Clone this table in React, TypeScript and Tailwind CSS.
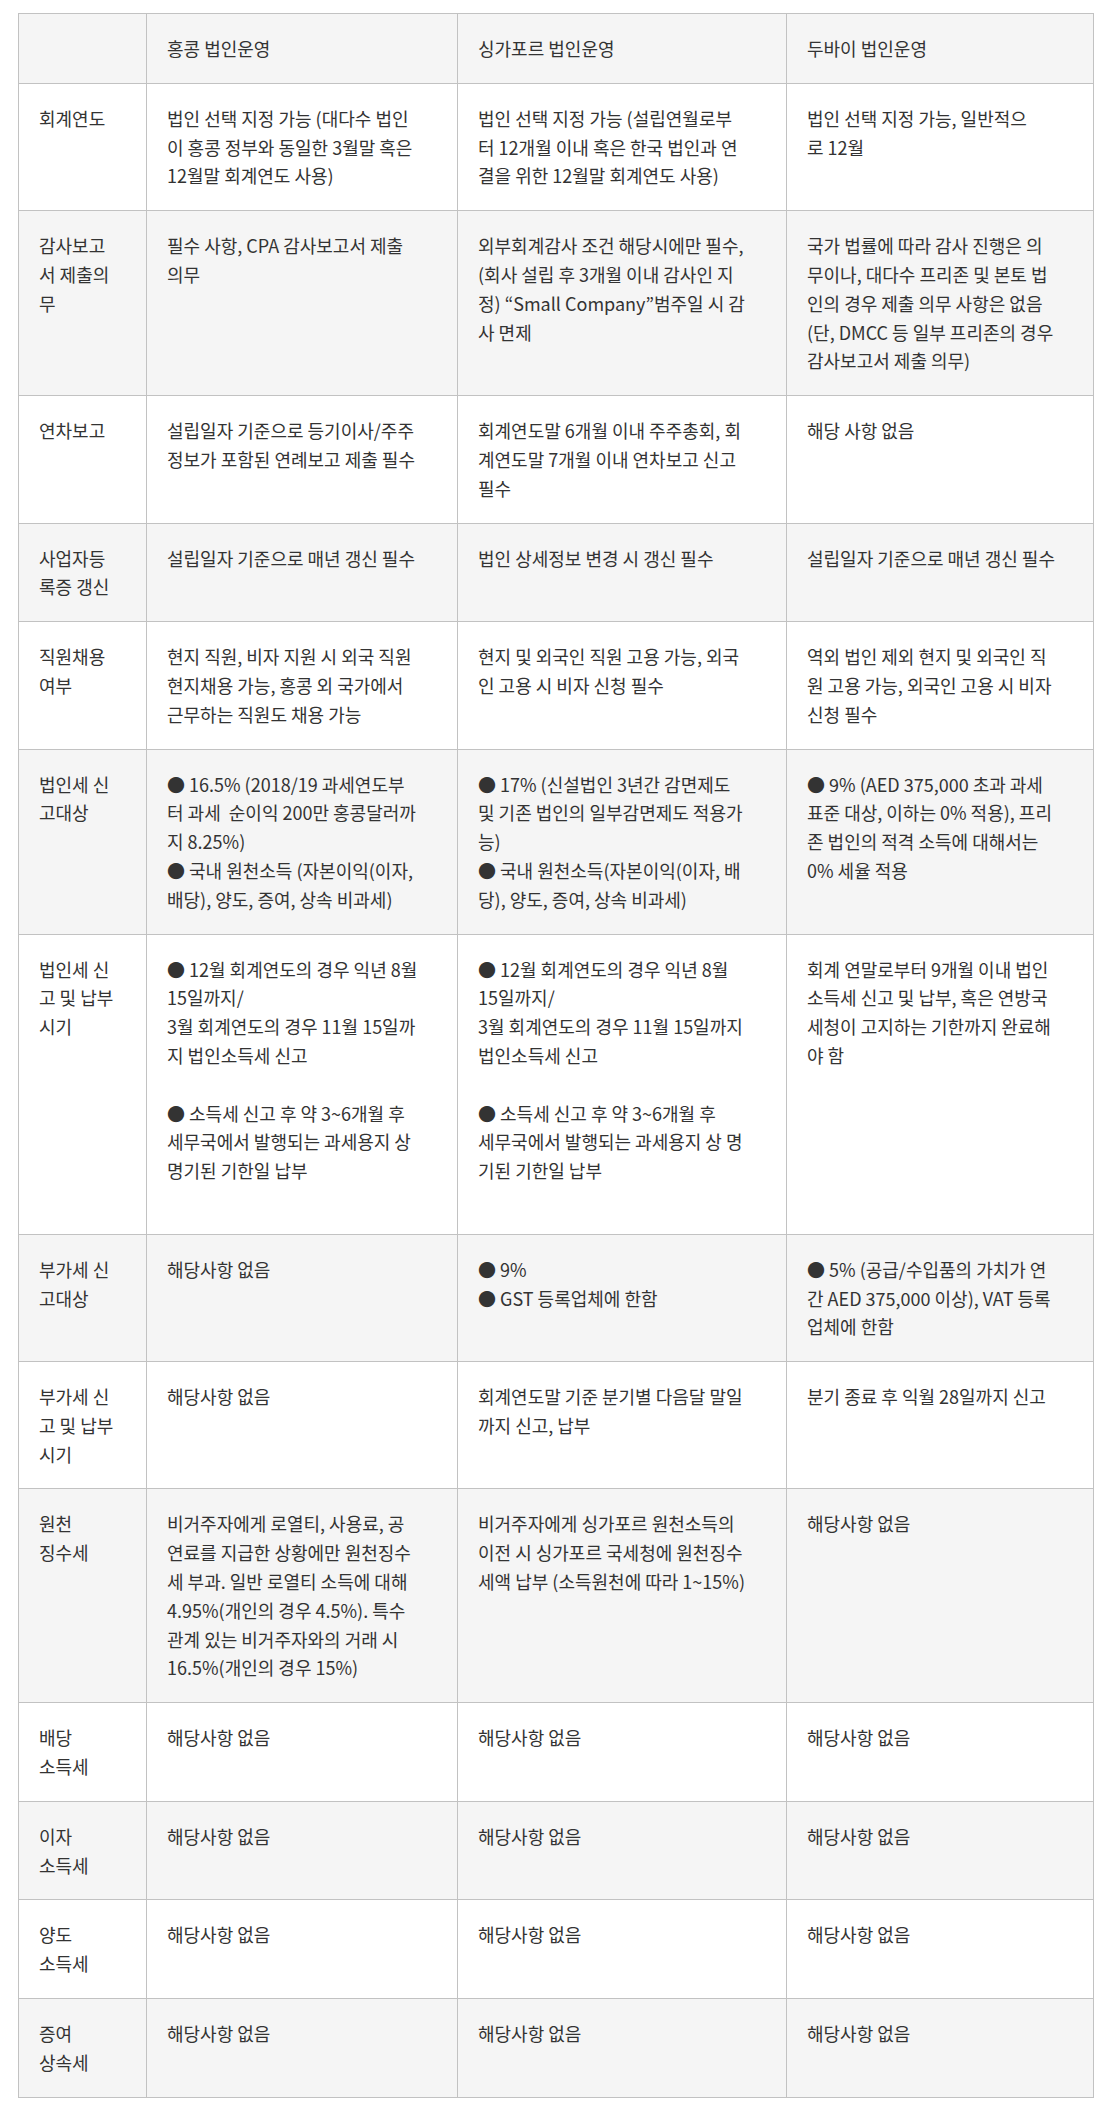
import React from 'react';

// Hong Kong / Singapore / Dubai corporate operations comparison table.
// Each cell is a list of lines so the wrapping matches the original page.

interface Row {
  label: string[];
  cells: string[][];
}

const headers = ['홍콩 법인운영', '싱가포르 법인운영', '두바이 법인운영'];

const rows: Row[] = [
  {
    label: ['회계연도'],
    cells: [
      ['법인 선택 지정 가능 (대다수 법인', '이 홍콩 정부와 동일한 3월말 혹은', '12월말 회계연도 사용)'],
      ['법인 선택 지정 가능 (설립연월로부', '터 12개월 이내 혹은 한국 법인과 연', '결을 위한 12월말 회계연도 사용)'],
      ['법인 선택 지정 가능, 일반적으', '로 12월'],
    ],
  },
  {
    label: ['감사보고', '서 제출의', '무'],
    cells: [
      ['필수 사항, CPA 감사보고서 제출', '의무'],
      [
        '외부회계감사 조건 해당시에만 필수,',
        '(회사 설립 후 3개월 이내 감사인 지',
        '정) “Small Company”범주일 시 감',
        '사 면제',
      ],
      [
        '국가 법률에 따라 감사 진행은 의',
        '무이나, 대다수 프리존 및 본토 법',
        '인의 경우 제출 의무 사항은 없음',
        '(단, DMCC 등 일부 프리존의 경우',
        '감사보고서 제출 의무)',
      ],
    ],
  },
  {
    label: ['연차보고'],
    cells: [
      ['설립일자 기준으로 등기이사/주주', '정보가 포함된 연례보고 제출 필수'],
      ['회계연도말 6개월 이내 주주총회, 회', '계연도말 7개월 이내 연차보고 신고', '필수'],
      ['해당 사항 없음'],
    ],
  },
  {
    label: ['사업자등', '록증 갱신'],
    cells: [['설립일자 기준으로 매년 갱신 필수'], ['법인 상세정보 변경 시 갱신 필수'], ['설립일자 기준으로 매년 갱신 필수']],
  },
  {
    label: ['직원채용', '여부'],
    cells: [
      ['현지 직원, 비자 지원 시 외국 직원', '현지채용 가능, 홍콩 외 국가에서', '근무하는 직원도 채용 가능'],
      ['현지 및 외국인 직원 고용 가능, 외국', '인 고용 시 비자 신청 필수'],
      ['역외 법인 제외 현지 및 외국인 직', '원 고용 가능, 외국인 고용 시 비자', '신청 필수'],
    ],
  },
  {
    label: ['법인세 신', '고대상'],
    cells: [
      [
        '● 16.5% (2018/19 과세연도부',
        '터 과세  순이익 200만 홍콩달러까',
        '지 8.25%)',
        '● 국내 원천소득 (자본이익(이자,',
        '배당), 양도, 증여, 상속 비과세)',
      ],
      [
        '● 17% (신설법인 3년간 감면제도',
        '및 기존 법인의 일부감면제도 적용가',
        '능)',
        '● 국내 원천소득(자본이익(이자, 배',
        '당), 양도, 증여, 상속 비과세)',
      ],
      ['● 9% (AED 375,000 초과 과세', '표준 대상, 이하는 0% 적용), 프리', '존 법인의 적격 소득에 대해서는', '0% 세율 적용'],
    ],
  },
  {
    label: ['법인세 신', '고 및 납부', '시기'],
    cells: [
      [
        '● 12월 회계연도의 경우 익년 8월',
        '15일까지/',
        '3월 회계연도의 경우 11월 15일까',
        '지 법인소득세 신고',
        '',
        '● 소득세 신고 후 약 3~6개월 후',
        '세무국에서 발행되는 과세용지 상',
        '명기된 기한일 납부',
        '',
      ],
      [
        '● 12월 회계연도의 경우 익년 8월',
        '15일까지/',
        '3월 회계연도의 경우 11월 15일까지',
        '법인소득세 신고',
        '',
        '● 소득세 신고 후 약 3~6개월 후',
        '세무국에서 발행되는 과세용지 상 명',
        '기된 기한일 납부',
      ],
      ['회계 연말로부터 9개월 이내 법인', '소득세 신고 및 납부, 혹은 연방국', '세청이 고지하는 기한까지 완료해', '야 함'],
    ],
  },
  {
    label: ['부가세 신', '고대상'],
    cells: [
      ['해당사항 없음'],
      ['● 9%', '● GST 등록업체에 한함'],
      ['● 5% (공급/수입품의 가치가 연', '간 AED 375,000 이상), VAT 등록', '업체에 한함'],
    ],
  },
  {
    label: ['부가세 신', '고 및 납부', '시기'],
    cells: [['해당사항 없음'], ['회계연도말 기준 분기별 다음달 말일', '까지 신고, 납부'], ['분기 종료 후 익월 28일까지 신고']],
  },
  {
    label: ['원천', '징수세'],
    cells: [
      [
        '비거주자에게 로열티, 사용료, 공',
        '연료를 지급한 상황에만 원천징수',
        '세 부과. 일반 로열티 소득에 대해',
        '4.95%(개인의 경우 4.5%). 특수',
        '관계 있는 비거주자와의 거래 시',
        '16.5%(개인의 경우 15%)',
      ],
      ['비거주자에게 싱가포르 원천소득의', '이전 시 싱가포르 국세청에 원천징수', '세액 납부 (소득원천에 따라 1~15%)'],
      ['해당사항 없음'],
    ],
  },
  { label: ['배당', '소득세'], cells: [['해당사항 없음'], ['해당사항 없음'], ['해당사항 없음']] },
  { label: ['이자', '소득세'], cells: [['해당사항 없음'], ['해당사항 없음'], ['해당사항 없음']] },
  { label: ['양도', '소득세'], cells: [['해당사항 없음'], ['해당사항 없음'], ['해당사항 없음']] },
  { label: ['증여', '상속세'], cells: [['해당사항 없음'], ['해당사항 없음'], ['해당사항 없음']] },
];

const Lines: React.FC<{ lines: string[] }> = ({ lines }) => (
  <>
    {lines.map((line, i) => (
      <div key={i} className="whitespace-pre">
        {line || '\u00a0'}
      </div>
    ))}
  </>
);

const cellClass = 'border border-[#c2c2c2] p-5 align-top text-left font-normal';

export default function App() {
  return (
    <div
      className="min-h-[2114px] bg-white px-[18px] pt-[13px] pb-[17px] text-[18px] leading-[28.8px] text-[#333333]"
      style={{ fontFamily: '"Noto Sans CJK KR", "Noto Sans", sans-serif' }}
    >
      <table className="w-[1075px] table-fixed border-collapse">
        <colgroup>
          <col className="w-[128px]" />
          <col className="w-[311px]" />
          <col className="w-[329px]" />
          <col className="w-[307px]" />
        </colgroup>
        <thead>
          <tr className="bg-[#f5f5f5]">
            <th className={cellClass} />
            {headers.map((h) => (
              <th key={h} className={cellClass}>
                {h}
              </th>
            ))}
          </tr>
        </thead>
        <tbody>
          {rows.map((row, index) => (
            <tr key={row.label.join('')} className={index % 2 === 1 ? 'bg-[#f5f5f5]' : 'bg-white'}>
              <td className={cellClass}>
                <Lines lines={row.label} />
              </td>
              {row.cells.map((cell, i) => (
                <td key={i} className={cellClass}>
                  <Lines lines={cell} />
                </td>
              ))}
            </tr>
          ))}
        </tbody>
      </table>
    </div>
  );
}
